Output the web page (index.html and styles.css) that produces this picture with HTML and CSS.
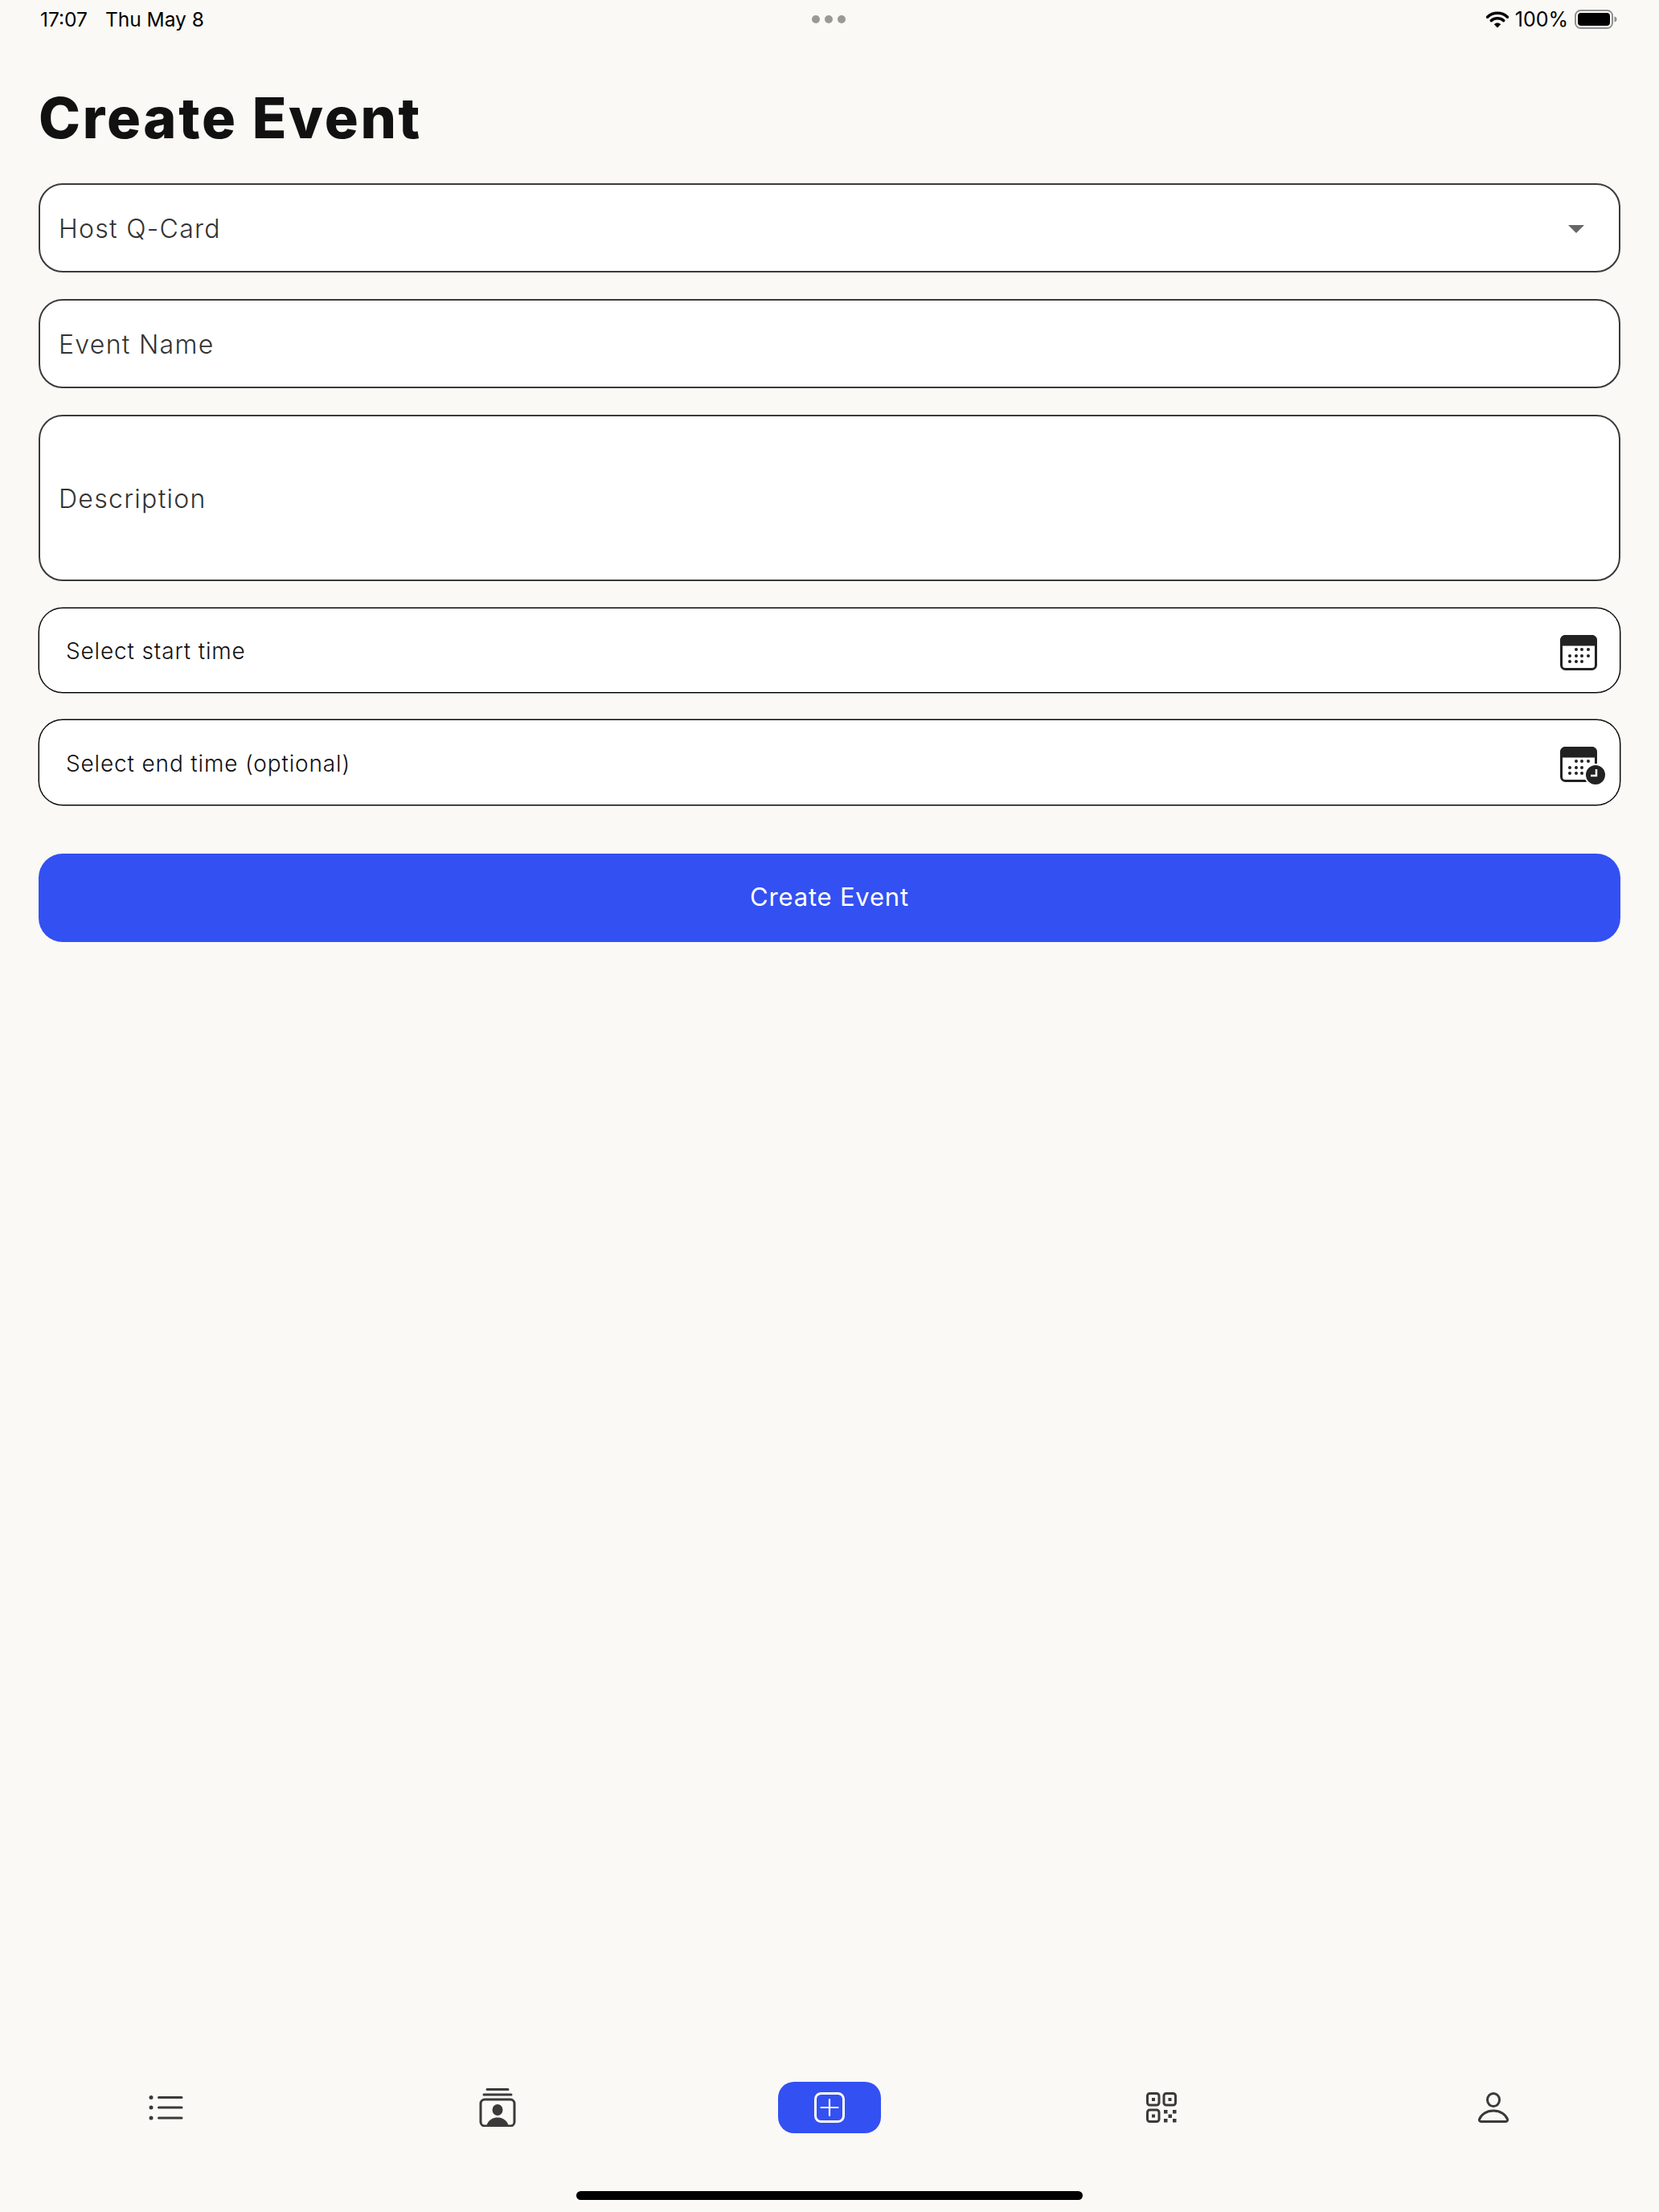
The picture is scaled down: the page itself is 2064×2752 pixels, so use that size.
FILE: index.html
```html
<!DOCTYPE html>
<html lang="en">
<head>
<meta charset="utf-8">
<title>Create Event</title>
<link rel="stylesheet" href="styles.css">
</head>
<body>
<div class="page">
  <header class="status">
    <div class="status-left"><span>17:07</span><span>Thu May 8</span></div>
    <div class="status-dots"><i></i><i></i><i></i></div>
    <div class="status-right">
      <svg class="wifi" width="28" height="22" viewBox="0 0 28 22"><path d="M1.5 8.2C8.6 1.6 19.4 1.6 26.5 8.2" fill="none" stroke="#000" stroke-width="3.6" stroke-linecap="round"/><path d="M6.3 12.6C10.7 8.8 17.3 8.8 21.7 12.6" fill="none" stroke="#000" stroke-width="3.6" stroke-linecap="round"/><path d="M14 21.5 9.8 17.2C12.2 15 15.800 15 18.200 17.2Z" fill="#000"/></svg>
      <span>100%</span>
      <svg class="battery" width="53" height="24" viewBox="0 0 53 24"><rect x="1" y="1" width="46" height="22" rx="6.500" fill="none" stroke="#8f8f8f" stroke-width="2"/><rect x="4" y="4" width="40" height="16" rx="4" fill="#000"/><path d="M49.500 8.500C51.500 9 52.500 10.300 52.500 12C52.500 13.700 51.500 15 49.500 15.500Z" fill="#8f8f8f"/></svg>
    </div>
  </header>

  <main class="content">
    <h1 class="title">Create Event</h1>
    <form class="form">
      <div class="field field-lg">
        <span>Host Q-Card</span>
        <svg class="caret" width="20" height="10" viewBox="0 0 20 10"><path d="M0 0H20L10 10Z" fill="#666"/></svg>
      </div>
      <div class="field field-lg"><span>Event Name</span></div>
      <div class="field field-lg field-area"><span>Description</span></div>
      <div class="field field-date">
        <span>Select start time</span>
        <svg class="cal" width="46" height="44" viewBox="0 0 46 44">
          <rect x="1.500" y="1.500" width="43" height="41" rx="5" fill="#fff" stroke="#222" stroke-width="3"/>
          <path d="M1.500 12V6.500a5 5 0 0 1 5-5h33a5 5 0 0 1 5 5V12Z" fill="#222" stroke="#222" stroke-width="3"/>
          <g fill="#222"><circle cx="20" cy="18" r="2"/><circle cx="27" cy="18" r="2"/><circle cx="35" cy="18" r="2"/><circle cx="12" cy="26" r="2"/><circle cx="20" cy="26" r="2"/><circle cx="27" cy="26" r="2"/><circle cx="35" cy="26" r="2"/><circle cx="12" cy="33" r="2"/><circle cx="20" cy="33" r="2"/><circle cx="27" cy="33" r="2"/></g>
        </svg>
      </div>
      <div class="field field-date">
        <span>Select end time (optional)</span>
        <svg class="cal" width="58" height="48" viewBox="0 0 58 48">
          <rect x="1.500" y="1.500" width="43" height="41" rx="5" fill="#fff" stroke="#222" stroke-width="3"/>
          <path d="M1.500 12V6.500a5 5 0 0 1 5-5h33a5 5 0 0 1 5 5V12Z" fill="#222" stroke="#222" stroke-width="3"/>
          <g fill="#222"><circle cx="20" cy="18" r="2"/><circle cx="27" cy="18" r="2"/><circle cx="35" cy="18" r="2"/><circle cx="12" cy="26" r="2"/><circle cx="20" cy="26" r="2"/><circle cx="27" cy="26" r="2"/><circle cx="12" cy="33" r="2"/><circle cx="20" cy="33" r="2"/><circle cx="27" cy="33" r="2"/></g>
          <circle cx="44" cy="35" r="14" fill="#fff"/>
          <circle cx="44" cy="35" r="12" fill="#222"/>
          <path d="M45 28V36H38" fill="none" stroke="#fff" stroke-width="2.500"/>
        </svg>
      </div>
      <button class="submit" type="button">Create Event</button>
    </form>
  </main>

  <nav class="tabs">
    <div class="tab tab-list">
      <svg width="44" height="32" viewBox="0 0 44 32"><g fill="#3a3a3a"><circle cx="3" cy="3.500" r="2.500"/><circle cx="3" cy="16" r="2.500"/><circle cx="3" cy="29" r="2.500"/></g><path d="M12.500 3.500H41M12.500 16H41M12.500 29H41" stroke="#3a3a3a" stroke-width="3" stroke-linecap="round"/></svg>
    </div>
    <div class="tab">
      <svg width="46" height="48" viewBox="0 0 46 48">
        <path d="M10 1.500H36M6 8H40" stroke="#3a3a3a" stroke-width="3" stroke-linecap="round"/>
        <rect x="2" y="14" width="42" height="33" rx="5" fill="none" stroke="#3a3a3a" stroke-width="3"/>
        <ellipse cx="23" cy="27" rx="6.500" ry="7" fill="#3a3a3a"/>
        <path d="M9.500 46C12 39 17 36.500 23 36.500C29 36.500 34 39 36.500 46Z" fill="#3a3a3a"/>
      </svg>
    </div>
    <div class="tab">
      <div class="pill">
        <svg width="38" height="38" viewBox="0 0 38 38"><rect x="1.500" y="1.500" width="35" height="35" rx="7" fill="none" stroke="#fff" stroke-width="3"/><path d="M19 9V29M8.500 19H29.500" stroke="#fff" stroke-width="2.200" stroke-linecap="round"/></svg>
      </div>
    </div>
    <div class="tab">
      <svg width="38" height="38" viewBox="0 0 38 38">
        <g fill="none" stroke="#3a3a3a" stroke-width="3"><rect x="1.500" y="1.500" width="14.500" height="14.500" rx="3"/><rect x="22" y="1.500" width="14.500" height="14.500" rx="3"/><rect x="1.500" y="22" width="14.500" height="14.500" rx="3"/></g>
        <g fill="#3a3a3a"><rect x="7" y="7" width="4" height="4"/><rect x="27.500" y="7" width="4" height="4"/><rect x="7" y="27.500" width="4" height="4"/><rect x="22" y="22" width="4.500" height="4.500"/><rect x="33" y="22" width="4.500" height="4.500"/><rect x="27.500" y="27.500" width="4.500" height="4.500"/><rect x="22" y="33" width="4.500" height="4.500"/><rect x="33" y="33" width="4.500" height="4.500"/></g>
      </svg>
    </div>
    <div class="tab">
      <svg width="38" height="38" viewBox="0 0 38 38"><ellipse cx="19" cy="9.500" rx="7.500" ry="8" fill="none" stroke="#3a3a3a" stroke-width="3"/><path d="M19 23C10 23 3.500 28 1.600 33.500C1 35.500 2.500 36.500 4 36.500H34C35.500 36.500 37 35.500 36.400 33.500C34.500 28 28 23 19 23Z" fill="none" stroke="#3a3a3a" stroke-width="3" stroke-linejoin="round"/></svg>
    </div>
  </nav>
  <div class="home-wrap"><div class="home-bar"></div></div>
</div>
</body>
</html>
```

FILE: styles.css
```css
* { box-sizing: border-box; }
html, body { margin: 0; padding: 0; }
body { background: #faf9f5; font-family: "Inter", "Liberation Sans", sans-serif; }
.page { width: 2064px; height: 2752px; display: flex; flex-direction: column; }

.status { height: 48px; padding: 0 52px 0 50px; display: grid; grid-template-columns: 1fr auto 1fr; align-items: center; font-size: 25px; color: #000; }
.status-left { display: flex; gap: 22px; font-size: 24.5px; }
.status-dots { display: flex; gap: 6px; }
.status-dots i { width: 10px; height: 10px; border-radius: 50%; background: #999995; }
.status-right { display: flex; align-items: center; justify-content: flex-end; gap: 8px; }

.content { padding: 0 48px; flex: 1; }
.title { margin: 59px 0 0; font-size: 70px; line-height: 80px; font-weight: 800; color: #111; letter-spacing: 2.7px; }
.form { margin-top: 41px; display: flex; flex-direction: column; gap: 33px; }

.field { background: #fff; border-radius: 30px; display: flex; align-items: center; justify-content: space-between; }
.field-lg { height: 111px; padding: 2px 43px 0 23px; border: 2px solid #3a3a3a; font-size: 32px; font-weight: 300; letter-spacing: 1.3px; color: #333; }
.field-area { height: 207px; }
.field-date { height: 106px; padding: 2px 18px 0 33px; border: 1px solid #000; box-shadow: 0 0 0 0.5px #222; font-size: 28px; font-weight: 300; letter-spacing: 0.85px; color: #111; }
.field-date + .field-date { height: 107px; }
.field-date .cal { margin: 3px 10px 0 0; }
.field-date + .field-date .cal { margin: 7px -2px 0 0; }

.submit { height: 110px; margin-top: 27px; padding: 0 0 3px; border: 0; border-radius: 30px; background: #3350f2; color: #fff; font: 400 31px "Inter", "Liberation Sans", sans-serif; letter-spacing: 0.8px; }

.tabs { display: grid; grid-template-columns: repeat(5, 1fr); height: 64px; align-items: center; }
.tab { display: flex; justify-content: center; align-items: center; }
.tab-list { padding-left: 2px; }
.pill { width: 128px; height: 64px; border-radius: 20px; background: #3350f2; display: flex; align-items: center; justify-content: center; }
.home-wrap { height: 98px; padding-top: 72px; display: flex; justify-content: center; }
.home-bar { width: 630px; height: 11px; border-radius: 6px; background: #000; }
```
